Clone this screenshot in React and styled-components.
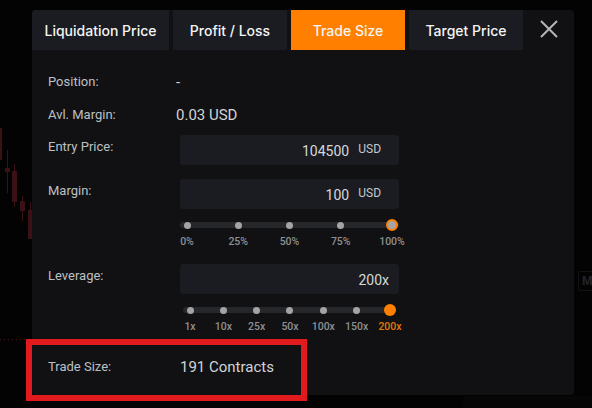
import React from "react";
import styled, { createGlobalStyle } from "styled-components";

const GlobalStyle = createGlobalStyle`
  html, body { margin: 0; padding: 0; background: #030303; }
  body { font-family: Roboto, "Noto Sans", Arial, sans-serif; -webkit-font-smoothing: antialiased; }
  * { box-sizing: border-box; }
`;

const Page = styled.div`
  position: relative;
  width: 592px;
  height: 408px;
  overflow: hidden;
  background: #030303;
  padding: 10px 0 0 32px;
`;

const Backdrop = styled.svg`
  position: absolute;
  left: 0;
  top: 0;
  width: 592px;
  height: 408px;
`;

const AxisTag = styled.div`
  position: absolute;
  left: 578px;
  top: 271px;
  width: 30px;
  height: 20px;
  border: 1px solid #121212;
  border-radius: 2px;
  color: #242424;
  font-size: 12px;
  font-weight: 700;
  line-height: 18px;
  padding-left: 3px;
`;

const Modal = styled.div`
  position: relative;
  width: 542px;
  height: 385px;
  background: #111114;
  border-radius: 4px;
  display: flex;
  flex-direction: column;
`;

const Header = styled.div`
  display: flex;
  gap: 4px;
  height: 40px;
`;

const Tab = styled.div`
  min-width: 114px;
  padding: 0 12.5px;
  display: flex;
  align-items: center;
  justify-content: center;
  background: ${(p) => (p.$active ? "#ff8000" : "#1b1c21")};
  color: #f4f4f4;
  font-family: Inter, Roboto, sans-serif;
  font-size: 14px;
  font-weight: 500;
  white-space: nowrap;
  &:first-child { border-top-left-radius: 4px; }
`;

const CloseButton = styled.div`
  flex: 1;
  display: flex;
  align-items: center;
  justify-content: center;
  padding-right: 2px;
  padding-bottom: 3px;
`;

const Body = styled.div`
  padding: 15px 16px 0 16px;
  display: flex;
  flex-direction: column;
`;

const InfoRow = styled.div`
  display: grid;
  grid-template-columns: 128px 1fr;
  align-items: center;
  height: 33px;
  margin-top: ${(p) => p.$mt || 0}px;
`;

const Label = styled.div`
  color: #bcc0c4;
  font-size: 13px;
  line-height: 16px;
`;

const Value = styled.div`
  color: #d2d4d6;
  font-size: 15px;
  padding-left: ${(p) => p.$pl || 0}px;
`;

const FieldRow = styled.div`
  display: grid;
  grid-template-columns: 128px 1fr;
  align-items: start;
  margin-top: ${(p) => p.$mt}px;
  ${Label} { padding-top: 4px; }
`;

const InputBox = styled.div`
  margin-left: 4px;
  width: 219px;
  height: 30px;
  background: #1b1c21;
  border-radius: 3px;
  display: flex;
  align-items: center;
  justify-content: flex-end;
  padding-right: 10px;
`;

const InputValue = styled.span`
  color: #d6d8da;
  font-size: 14px;
  padding-top: 1px;
`;

const Unit = styled.span`
  color: #c4c8cc;
  font-size: 12px;
  margin-left: 9px;
  padding-right: 8px;
  padding-bottom: 3px;
`;

const SliderRow = styled.div`
  margin-top: 10px;
  padding-left: ${(p) => p.$left}px;
`;

const Slider = styled.div`
  position: relative;
  width: ${(p) => p.$width}px;
  display: flex;
  justify-content: space-between;
  &::before {
    content: "";
    position: absolute;
    left: ${(p) => p.$trackL}px;
    right: ${(p) => p.$trackR}px;
    top: 3px;
    height: 6px;
    border-radius: 3px;
    background: #26272b;
  }
`;

const Stop = styled.div`
  position: relative;
  width: 24px;
  display: flex;
  flex-direction: column;
  align-items: center;
`;

const Knob = styled.div`
  height: 12px;
  display: flex;
  align-items: center;
  justify-content: center;
`;

const Dot = styled.div`
  width: 7px;
  height: 7px;
  border-radius: 50%;
  background: #a4a4a6;
`;

const Thumb = styled.div`
  width: 12px;
  height: 12px;
  border-radius: 50%;
  background: ${(p) => (p.$ring ? "#a4a4a6" : "#ff8000")};
  border: ${(p) => (p.$ring ? "2.5px solid #ff8000" : "none")};
`;

const StopLabel = styled.div`
  margin-top: 4px;
  line-height: 14px;
  font-size: 10.5px;
  font-weight: 500;
  white-space: nowrap;
  color: ${(p) => (p.$accent ? "#e07a0a" : "#8e8f91")};
`;

const Annotation = styled.div`
  position: absolute;
  left: 26px;
  top: 339px;
  width: 281px;
  height: 62px;
  border: 6px solid #e11b1d;
`;

function CloseIcon() {
  return (
    <svg width="18" height="18" viewBox="0 0 18 18">
      <path d="M1 1 L17 17 M17 1 L1 17" stroke="#b6b6b8" strokeWidth="2" />
    </svg>
  );
}

function RangeSlider({ stops, width, trackL, trackR, ring, accentLast, left }) {
  return (
    <SliderRow $left={left}>
      <Slider $width={width} $trackL={trackL} $trackR={trackR}>
        {stops.map((s, i) => {
          const last = i === stops.length - 1;
          return (
            <Stop key={s}>
              <Knob>{last ? <Thumb $ring={ring} /> : <Dot />}</Knob>
              <StopLabel $accent={last && accentLast}>{s}</StopLabel>
            </Stop>
          );
        })}
      </Slider>
    </SliderRow>
  );
}

const candles = [
  { x: 0, w: 2, y1: 128, y2: 160, wy1: 128, wy2: 160 },
  { x: 5, w: 5, y1: 168, y2: 172, wy1: 150, wy2: 193 },
  { x: 12, w: 5, y1: 171, y2: 202, wy1: 164, wy2: 207 },
  { x: 20, w: 5, y1: 201, y2: 211, wy1: 196, wy2: 221 },
  { x: 28, w: 5, y1: 210, y2: 239, wy1: 202, wy2: 239 },
];

export default function App() {
  return (
    <>
      <GlobalStyle />
      <Page>
        <Backdrop viewBox="0 0 592 408">
          {candles.map((c, i) => (
            <g key={i} fill="#3a1215">
              <rect x={c.x + c.w / 2 - 0.5} y={c.wy1} width="1" height={c.wy2 - c.wy1} />
              <rect x={c.x} y={c.y1} width={c.w} height={c.y2 - c.y1} />
            </g>
          ))}
          <line x1="0" y1="339.5" x2="26" y2="339.5" stroke="#4a1518" strokeDasharray="1 3" />
          <rect x="463" y="396" width="129" height="12" fill="#060606" />
        </Backdrop>
        <AxisTag>M</AxisTag>
        <Modal>
          <Header>
            <Tab>Liquidation Price</Tab>
            <Tab>Profit / Loss</Tab>
            <Tab $active>Trade Size</Tab>
            <Tab>Target Price</Tab>
            <CloseButton>
              <CloseIcon />
            </CloseButton>
          </Header>
          <Body>
            <InfoRow>
              <Label>Position:</Label>
              <Value>-</Value>
            </InfoRow>
            <InfoRow>
              <Label>Avl. Margin:</Label>
              <Value>0.03 USD</Value>
            </InfoRow>
            <FieldRow $mt={4}>
              <Label>Entry Price:</Label>
              <InputBox>
                <InputValue>104500</InputValue>
                <Unit>USD</Unit>
              </InputBox>
            </FieldRow>
            <FieldRow $mt={14}>
              <Label>Margin:</Label>
              <InputBox>
                <InputValue>100</InputValue>
                <Unit>USD</Unit>
              </InputBox>
            </FieldRow>
            <RangeSlider
              left={127}
              width={229}
              trackL={5}
              trackR={5}
              ring
              stops={["0%", "25%", "50%", "75%", "100%"]}
            />
            <FieldRow $mt={15}>
              <Label>Leverage:</Label>
              <InputBox>
                <InputValue>200x</InputValue>
              </InputBox>
            </FieldRow>
            <RangeSlider
              left={130}
              width={224}
              trackL={5}
              trackR={6}
              accentLast
              stops={["1x", "10x", "25x", "50x", "100x", "150x", "200x"]}
            />
            <InfoRow $mt={16}>
              <Label>Trade Size:</Label>
              <Value $pl={4}>191 Contracts</Value>
            </InfoRow>
          </Body>
        </Modal>
        <Annotation />
      </Page>
    </>
  );
}
